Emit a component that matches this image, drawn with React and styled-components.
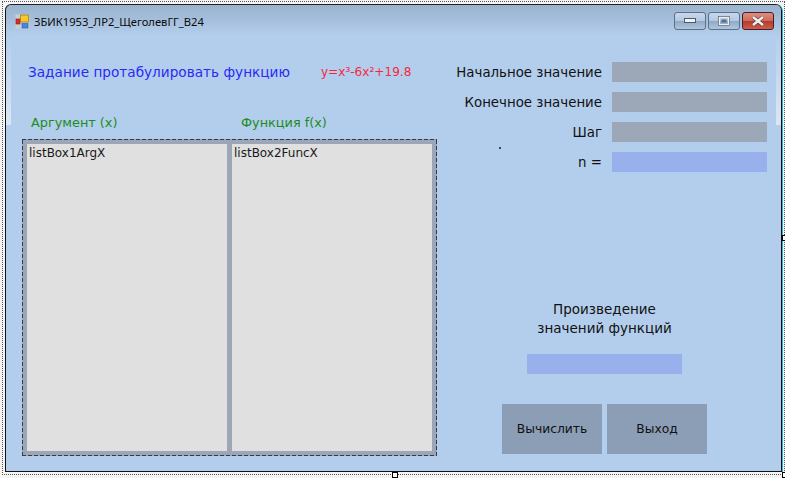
import React from 'react';
import styled, { createGlobalStyle } from 'styled-components';

const GlobalStyle = createGlobalStyle`
  html, body {
    margin: 0;
    padding: 0;
    width: 785px;
    height: 478px;
    overflow: hidden;
    background: #f4f4f4;
  }
`;

const Designer = styled.div`
  position: relative;
  width: 785px;
  height: 478px;
  padding: 5px 3px 5px 5px;
  box-sizing: border-box;
  overflow: hidden;
`;

const SelectionFrame = styled.div`
  position: absolute;
  left: 2px;
  top: 1px;
  width: 783px;
  height: 474px;
  box-sizing: border-box;
  border: 1px dotted #555;
  pointer-events: none;
`;

const Handle = styled.div`
  position: absolute;
  left: ${props => props.$x}px;
  top: ${props => props.$y}px;
  width: 6px;
  height: 6px;
  box-sizing: border-box;
  background: white;
  border: 1px solid black;
`;

const Window = styled.div`
  position: relative;
  width: 777px;
  height: 467px;
  box-sizing: border-box;
  display: flex;
  flex-direction: column;
  background: #b3ceec;
  border-left: 1px solid #111;
  border-right: 1px solid #111;
  border-bottom: 1px solid #111;
  border-radius: 6px 6px 0 0;
  box-shadow: 1px 0 0 #29b6d8, 0 -1px 0 #222;
  overflow: hidden;
`;

const TitleBar = styled.div`
  height: 30px;
  flex: none;
  box-sizing: border-box;
  display: flex;
  align-items: center;
  padding: 2px 7px 0 9px;
  background: linear-gradient(#9ab3cd, #a6c0dd 55%, #b3ceec);
`;

const TitleText = styled.span`
  margin-left: 4px;
  font: 11.2px "Noto Sans", "Liberation Sans", sans-serif;
  color: #0a0a0a;
  white-space: nowrap;
`;

const CaptionButtons = styled.div`
  margin-left: auto;
  display: flex;
  gap: 2px;
`;

const CaptionButton = styled.div`
  width: 32px;
  height: 18px;
  box-sizing: border-box;
  display: flex;
  align-items: center;
  justify-content: center;
  border: 1px solid ${props => (props.$close ? '#4a1a2a' : '#5d6f86')};
  border-radius: 3px;
  background: ${props =>
    props.$close
      ? 'linear-gradient(#dc8f80, #cf6a58 48%, #b93a28 52%, #c8604e)'
      : 'linear-gradient(#c6d8ec, #b3c9e2 48%, #8fa9c6 52%, #afc6df)'};
`;

const Body = styled.div`
  flex: 1;
  display: flex;
  padding: 27px 14px 0 16px;
`;

const LeftColumn = styled.div`
  width: 415px;
  flex: none;
  display: flex;
  flex-direction: column;
`;

const TaskRow = styled.div`
  height: 20px;
  display: flex;
  align-items: center;
  padding-left: 6px;
`;

const TaskText = styled.span`
  font: 13.65px "DejaVu Sans", sans-serif;
  color: ${props => props.$color};
  white-space: nowrap;
`;

const Formula = styled(TaskText)`
  margin-left: 31px;
  font-size: 12.1px;
`;

const ColumnHeads = styled.div`
  height: 18px;
  margin-top: 31px;
  display: flex;
  align-items: center;
  padding-left: 9px;
`;

const ColumnHead = styled.span`
  width: 210px;
  flex: none;
  font: 12.85px "DejaVu Sans", sans-serif;
  color: #1c8c1c;
  white-space: nowrap;
`;

const ListFrame = styled.div`
  margin-top: 8px;
  width: 415px;
  height: 317px;
  box-sizing: border-box;
  display: flex;
  gap: 5px;
  padding: 5px;
  background-color: #9ca6b6;
  background-image:
    repeating-linear-gradient(90deg, #333a48 0 4px, transparent 4px 6px),
    repeating-linear-gradient(90deg, #333a48 0 4px, transparent 4px 6px),
    repeating-linear-gradient(0deg, #333a48 0 4px, transparent 4px 6px),
    repeating-linear-gradient(0deg, #333a48 0 4px, transparent 4px 6px);
  background-size: 100% 1px, 100% 1px, 1px 100%, 1px 100%;
  background-position: 0 0, 0 100%, 0 0, 100% 0;
  background-repeat: no-repeat;
`;

const ListBox = styled.div`
  flex: 1;
  background: #e0e0e0;
  padding: 1px 2px 0;
  font: 12px/17px "DejaVu Sans", sans-serif;
  color: #1a1a1a;
`;

const RightColumn = styled.div`
  margin-left: 8px;
  width: 322px;
  flex: none;
  display: flex;
  flex-direction: column;
`;

const Fields = styled.div`
  display: flex;
  flex-direction: column;
  gap: 10px;
`;

const FieldRow = styled.div`
  height: 20px;
  display: flex;
  align-items: center;
  justify-content: flex-end;
  gap: 10px;
`;

const FieldLabel = styled.span`
  font: 13.35px "DejaVu Sans", sans-serif;
  color: #111;
  white-space: nowrap;
`;

const InputBox = styled.div`
  width: 155px;
  height: 20px;
  flex: none;
  background: ${props => (props.$result ? '#98b0ec' : '#9ca7b7')};
`;

const ResultBlock = styled.div`
  margin: 128px 0 0 57px;
  width: 205px;
  display: flex;
  flex-direction: column;
  align-items: center;
`;

const ResultCaption = styled.div`
  font: 13.5px/19px "DejaVu Sans", sans-serif;
  color: #111;
  text-align: center;
`;

const ResultBox = styled(InputBox)`
  margin-top: 16px;
`;

const Buttons = styled.div`
  margin-top: 30px;
  display: flex;
  gap: 5px;
`;

const ActionButton = styled.div`
  width: 100px;
  height: 50px;
  display: flex;
  align-items: center;
  justify-content: center;
  background: #8c9eb5;
  font: 12.3px "DejaVu Sans", sans-serif;
  color: #111;
`;

const StrayDot = styled.div`
  position: absolute;
  left: 493px;
  top: 142px;
  width: 2px;
  height: 2px;
  background: #3a3a9a;
`;

const GlassEdge = styled.div`
  position: absolute;
  top: 30px;
  width: 5px;
  height: 90px;
  ${props => (props.$right ? 'right: 0;' : 'left: 0;')}
  background: linear-gradient(#b3ceec, #dbe7f6);
`;

function AppIcon() {
  return (
    <svg width="15" height="15" viewBox="0 0 15 15">
      <rect x="0.5" y="0.5" width="14" height="14" fill="#c6d0dc" />
      <rect x="1" y="5" width="4" height="5" fill="#d8302a" stroke="#8a1a14" strokeWidth="0.6" />
      <rect x="5.5" y="1" width="8" height="7" fill="#f6c92e" stroke="#a87c10" strokeWidth="0.8" />
      <rect x="7" y="9.5" width="6" height="4.5" fill="#4a86dc" stroke="#2a5aa8" strokeWidth="0.6" />
    </svg>
  );
}

function MinGlyph() {
  return (
    <svg width="12" height="6" viewBox="0 0 12 6">
      <rect x="0.5" y="0.5" width="11" height="4" fill="#f2f2f2" stroke="#4d5a6c" />
    </svg>
  );
}

function MaxGlyph() {
  return (
    <svg width="12" height="10" viewBox="0 0 12 10">
      <rect x="1" y="1" width="10" height="8" fill="none" stroke="#f0f0f0" strokeWidth="2" />
      <rect x="0.5" y="0.5" width="11" height="9" fill="none" stroke="#4d5a6c" strokeWidth="0.7" />
      <rect x="3.5" y="3.5" width="5" height="3" fill="#5b6f8c" />
    </svg>
  );
}

function CloseGlyph() {
  return (
    <svg width="14" height="10" viewBox="0 0 14 10">
      <path d="M2 1 L12 9 M12 1 L2 9" stroke="#5a3a3a" strokeWidth="3.6" />
      <path d="M2 1 L12 9 M12 1 L2 9" stroke="#f2f2f2" strokeWidth="2.4" />
    </svg>
  );
}

export default function App() {
  return (
    <Designer>
      <GlobalStyle />
      <Window>
        <TitleBar>
          <AppIcon />
          <TitleText>ЗБИК1953_ЛР2_ЩеголевГГ_В24</TitleText>
          <CaptionButtons>
            <CaptionButton><MinGlyph /></CaptionButton>
            <CaptionButton><MaxGlyph /></CaptionButton>
            <CaptionButton $close><CloseGlyph /></CaptionButton>
          </CaptionButtons>
        </TitleBar>
        <GlassEdge />
        <GlassEdge $right />
        <Body>
          <LeftColumn>
            <TaskRow>
              <TaskText $color="#2a2af5">Задание протабулировать функцию</TaskText>
              <Formula $color="#f5283c">y=x³-6x²+19.8</Formula>
            </TaskRow>
            <ColumnHeads>
              <ColumnHead>Аргумент (x)</ColumnHead>
              <ColumnHead>Функция f(x)</ColumnHead>
            </ColumnHeads>
            <ListFrame>
              <ListBox>listBox1ArgX</ListBox>
              <ListBox>listBox2FuncX</ListBox>
            </ListFrame>
          </LeftColumn>
          <RightColumn>
            <Fields>
              <FieldRow><FieldLabel>Начальное значение</FieldLabel><InputBox /></FieldRow>
              <FieldRow><FieldLabel>Конечное значение</FieldLabel><InputBox /></FieldRow>
              <FieldRow><FieldLabel>Шаг</FieldLabel><InputBox /></FieldRow>
              <FieldRow><FieldLabel>n =</FieldLabel><InputBox $result /></FieldRow>
            </Fields>
            <ResultBlock>
              <ResultCaption>Произведение<br />значений функций</ResultCaption>
              <ResultBox $result />
              <Buttons>
                <ActionButton>Вычислить</ActionButton>
                <ActionButton>Выход</ActionButton>
              </Buttons>
            </ResultBlock>
          </RightColumn>
        </Body>
        <StrayDot />
      </Window>
      <SelectionFrame />
      <Handle $x={392} $y={472} />
      <Handle $x={782} $y={235} />
      <Handle $x={782} $y={472} />
    </Designer>
  );
}
